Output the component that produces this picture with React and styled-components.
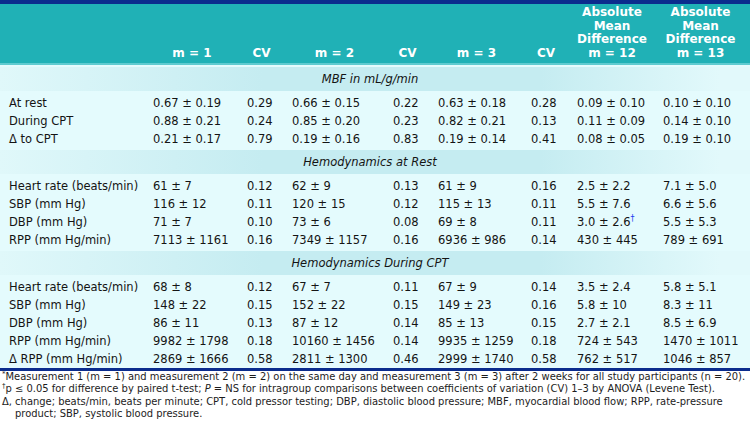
import React from 'react';
import styled, { createGlobalStyle } from 'styled-components';

const GlobalStyle = createGlobalStyle`
  html, body {
    margin: 0;
    padding: 0;
    background: #ffffff;
  }
`;

// Column widths, left to right
const columns = [149, 94, 45, 101, 45, 93, 46, 86, 91];

const Page = styled.div`
  width: 750px;
  font-family: "DejaVu Sans", "Liberation Sans", sans-serif;
  color: #141414;
`;

const TopBar = styled.div`
  height: 4px;
  background: #0b2c8d;
`;

const Table = styled.table`
  width: 750px;
  table-layout: fixed;
  border-collapse: collapse;
  background: #e4fbfd;
`;

const HeadRow = styled.tr`
  height: 60px;
  background: #20b1b6;
  border-bottom: 2px solid #5fcbd0;
`;

const HeadCell = styled.th`
  padding: 0 12px 3px 4px;
  vertical-align: bottom;
  text-align: center;
  color: #ffffff;
  font-size: 12px;
  font-weight: bold;
  line-height: 13.5px;
`;

const BandCell = styled.td`
  padding: 2px 0 3px;
`;

const Band = styled.div`
  height: 24px;
  line-height: 24px;
  padding-right: 10px;
  text-align: center;
  font-size: 11.5px;
  font-style: italic;
  background: linear-gradient(90deg, #e0f8fa 0%, #c5ecf1 35%, #c5ecf1 72%, #e2f9fb 96%);
`;

const Row = styled.tr`
  height: 18px;
`;

const Cell = styled.td`
  padding: 0 0 0 ${p => (p.$label ? 9 : 4)}px;
  font-size: 11.5px;
  line-height: 18px;
  white-space: nowrap;
`;

const Dagger = styled.sup`
  color: #1a3cf0;
  font-size: 8px;
  line-height: 0;
`;

const Notes = styled.div`
  border-top: 3px solid #0b2c8d;
  padding: 0 0 0 2px;
  font-size: 9.95px;
  line-height: 12.4px;
  color: #1c1c1c;
  white-space: nowrap;
`;

const NoteLine = styled.div`
  padding-left: ${p => (p.$indent ? 13 : 0)}px;
`;

const Mark = styled.sup`
  font-size: 7px;
  line-height: 0;
`;

const sections = [
  {
    title: 'MBF in mL/g/min',
    rows: [
      ['At rest', '0.67 ± 0.19', '0.29', '0.66 ± 0.15', '0.22', '0.63 ± 0.18', '0.28', '0.09 ± 0.10', '0.10 ± 0.10'],
      ['During CPT', '0.88 ± 0.21', '0.24', '0.85 ± 0.20', '0.23', '0.82 ± 0.21', '0.13', '0.11 ± 0.09', '0.14 ± 0.10'],
      ['Δ to CPT', '0.21 ± 0.17', '0.79', '0.19 ± 0.16', '0.83', '0.19 ± 0.14', '0.41', '0.08 ± 0.05', '0.19 ± 0.10'],
    ],
  },
  {
    title: 'Hemodynamics at Rest',
    rows: [
      ['Heart rate (beats/min)', '61 ± 7', '0.12', '62 ± 9', '0.13', '61 ± 9', '0.16', '2.5 ± 2.2', '7.1 ± 5.0'],
      ['SBP (mm Hg)', '116 ± 12', '0.11', '120 ± 15', '0.12', '115 ± 13', '0.11', '5.5 ± 7.6', '6.6 ± 5.6'],
      ['DBP (mm Hg)', '71 ± 7', '0.10', '73 ± 6', '0.08', '69 ± 8', '0.11', '3.0 ± 2.6†', '5.5 ± 5.3'],
      ['RPP (mm Hg/min)', '7113 ± 1161', '0.16', '7349 ± 1157', '0.16', '6936 ± 986', '0.14', '430 ± 445', '789 ± 691'],
    ],
  },
  {
    title: 'Hemodynamics During CPT',
    rows: [
      ['Heart rate (beats/min)', '68 ± 8', '0.12', '67 ± 7', '0.11', '67 ± 9', '0.14', '3.5 ± 2.4', '5.8 ± 5.1'],
      ['SBP (mm Hg)', '148 ± 22', '0.15', '152 ± 22', '0.15', '149 ± 23', '0.16', '5.8 ± 10', '8.3 ± 11'],
      ['DBP (mm Hg)', '86 ± 11', '0.13', '87 ± 12', '0.14', '85 ± 13', '0.15', '2.7 ± 2.1', '8.5 ± 6.9'],
      ['RPP (mm Hg/min)', '9982 ± 1798', '0.18', '10160 ± 1456', '0.14', '9935 ± 1259', '0.18', '724 ± 543', '1470 ± 1011'],
      ['Δ RPP (mm Hg/min)', '2869 ± 1666', '0.58', '2811 ± 1300', '0.46', '2999 ± 1740', '0.58', '762 ± 517', '1046 ± 857'],
    ],
  },
];

const renderValue = value =>
  value.endsWith('†') ? (
    <>
      {value.slice(0, -1)}
      <Dagger>†</Dagger>
    </>
  ) : (
    value
  );

const App = () => {
  return (
    <Page>
      <GlobalStyle />
      <TopBar />
      <Table>
        <colgroup>
          {columns.map((w, i) => (
            <col key={i} style={{ width: w }} />
          ))}
        </colgroup>
        <thead>
          <HeadRow>
            <HeadCell />
            <HeadCell>m = 1</HeadCell>
            <HeadCell>CV</HeadCell>
            <HeadCell>m = 2</HeadCell>
            <HeadCell>CV</HeadCell>
            <HeadCell>m = 3</HeadCell>
            <HeadCell>CV</HeadCell>
            <HeadCell>
              Absolute
              <br />
              Mean
              <br />
              Difference
              <br />m = 12
            </HeadCell>
            <HeadCell>
              Absolute
              <br />
              Mean
              <br />
              Difference
              <br />m = 13
            </HeadCell>
          </HeadRow>
        </thead>
        <tbody>
          {sections.map(section => (
            <React.Fragment key={section.title}>
              <tr>
                <BandCell colSpan={9}>
                  <Band>{section.title}</Band>
                </BandCell>
              </tr>
              {section.rows.map(row => (
                <Row key={row[0]}>
                  {row.map((value, i) => (
                    <Cell key={i} $label={i === 0}>
                      {renderValue(value)}
                    </Cell>
                  ))}
                </Row>
              ))}
            </React.Fragment>
          ))}
        </tbody>
      </Table>
      <Notes>
        <NoteLine>
          <Mark>*</Mark>Measurement 1 (m = 1) and measurement 2 (m = 2) on the same day and measurement 3 (m = 3) after 2 weeks for all study participants (n = 20).
        </NoteLine>
        <NoteLine>
          <Mark>†</Mark>p ≤ 0.05 for difference by paired t-test; <i>P</i> = NS for intragroup comparisons between coefficients of variation (CV) 1–3 by ANOVA (Levene Test).
        </NoteLine>
        <NoteLine>
          Δ, change; beats/min, beats per minute; CPT, cold pressor testing; DBP, diastolic blood pressure; MBF, myocardial blood flow; RPP, rate-pressure
        </NoteLine>
        <NoteLine $indent>product; SBP, systolic blood pressure.</NoteLine>
      </Notes>
    </Page>
  );
};

export default App;
